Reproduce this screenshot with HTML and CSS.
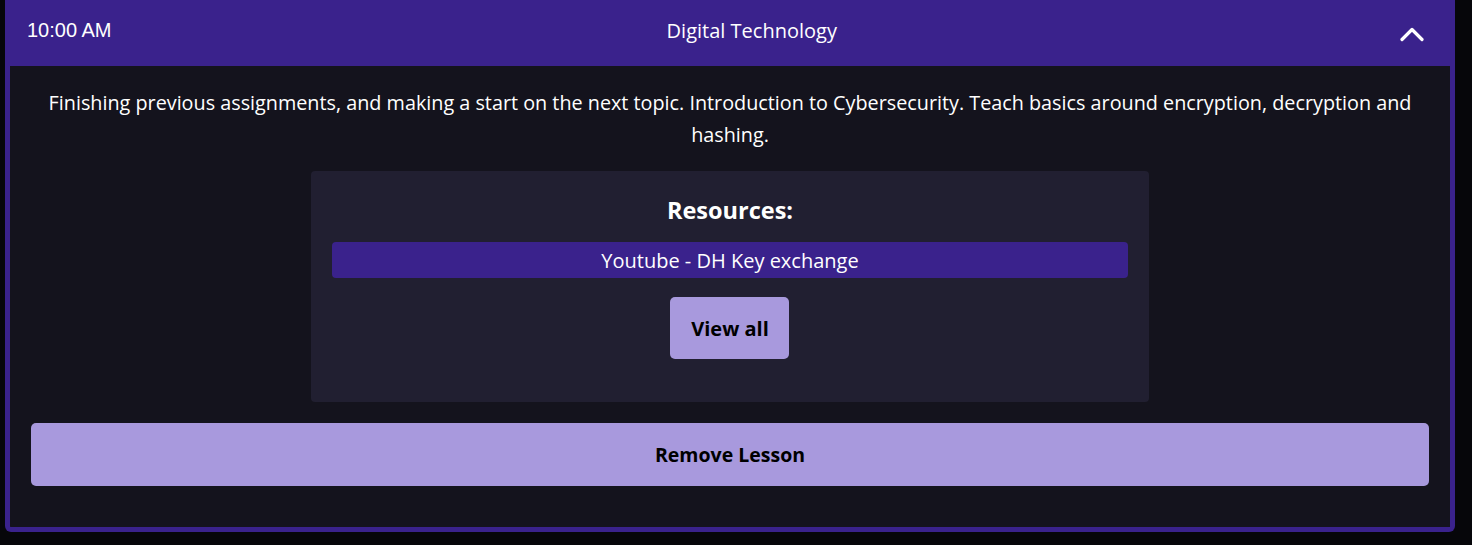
FILE: index.html
```html
<!DOCTYPE html>
<html>
<head>
<meta charset="utf-8">
<link rel="stylesheet" href="styles.css">
</head>
<body>
<div class="lesson">
  <div class="lesson-header">
    <span class="time">10:00 AM</span>
    <span class="title">Digital Technology</span>
    <span class="toggle">
      <svg width="24" height="24" viewBox="0 0 24 24"><path d="M2 16.5 L12 6.5 L22 16.5" fill="none" stroke="#fff" stroke-width="3.2" stroke-linecap="round" stroke-linejoin="round"/></svg>
    </span>
  </div>
  <div class="lesson-body">
    <p class="desc">Finishing previous assignments, and making a start on the next topic. Introduction to Cybersecurity. Teach basics around encryption, decryption and hashing.</p>
    <div class="resources">
      <h3 class="res-title">Resources:</h3>
      <div class="res-link">Youtube - DH Key exchange</div>
      <button class="btn btn-view">View all</button>
    </div>
    <button class="btn btn-remove">Remove Lesson</button>
  </div>
</div>
</body>
</html>
```
FILE: styles.css
```css
html, body {
  margin: 0;
  padding: 0;
  background: #06060a;
  font-family: "Open Sans", "Noto Sans", sans-serif;
  color: #fff;
}
body {
  padding-left: 5px;
  width: 1450px;
}
.lesson {
  background: #14131d;
  border: 5px solid #3a228c;
  border-top: none;
  border-radius: 0 0 6px 6px;
  width: 1440px;
}
.lesson-header {
  margin: 0 -5px;
  height: 66px;
  background: #3a228c;
  display: flex;
  align-items: center;
  justify-content: space-between;
  padding: 0 23px 0 22px;
  font-size: 20px;
}
.time {
  font-family: "Liberation Sans", Arial, sans-serif;
  font-size: 20px;
  margin-top: -5px;
}
.title {
  margin-top: -6px;
}
.toggle {
  width: 40px;
  height: 40px;
  display: flex;
  align-items: center;
  justify-content: center;
  margin-top: 4px;
}
.lesson-body {
  padding: 21px 21px 41px;
  display: flex;
  flex-direction: column;
  align-items: center;
}
.desc {
  margin: 0;
  text-align: center;
  font-size: 19.8px;
  line-height: 32px;
}
.resources {
  margin-top: 20px;
  width: 60%;
  box-sizing: border-box;
  background: #211f31;
  border-radius: 4px;
  padding: 21px 21px 43px;
  display: flex;
  flex-direction: column;
  align-items: center;
}
.res-title {
  margin: 0;
  font-size: 23.5px;
  font-weight: 700;
  line-height: 36px;
}
.res-link {
  margin-top: 14px;
  align-self: stretch;
  height: 36px;
  background: #3a228c;
  border-radius: 4px;
  display: flex;
  align-items: center;
  justify-content: center;
  font-size: 20px;
}
.btn {
  border: none;
  background: #a899dd;
  color: #000;
  font-family: "Open Sans", "Noto Sans", sans-serif;
  font-weight: 700;
  font-size: 20px;
  border-radius: 5px;
  cursor: pointer;
}
.btn-view {
  margin-top: 19px;
  width: 119px;
  height: 62px;
}
.btn-remove {
  margin-top: 21px;
  align-self: stretch;
  height: 63px;
  font-size: 19.5px;
}
```
